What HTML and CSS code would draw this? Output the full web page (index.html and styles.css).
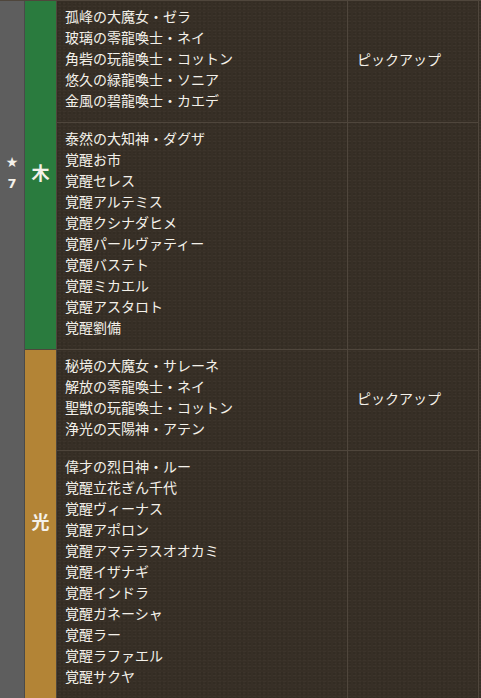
FILE: index.html
```html
<!DOCTYPE html>
<html lang="ja">
<head>
<meta charset="utf-8">
<link rel="stylesheet" href="styles.css">
</head>
<body>
<div class="table">
  <div class="rarity"><span class="star">★</span><span>7</span></div>
  <div class="attr wood">木</div>
  <div class="names">
    <div>孤峰の大魔女・ゼラ</div>
    <div>玻璃の零龍喚士・ネイ</div>
    <div>角砦の玩龍喚士・コットン</div>
    <div>悠久の緑龍喚士・ソニア</div>
    <div>金風の碧龍喚士・カエデ</div>
  </div>
  <div class="note">ピックアップ</div>
  <div class="names">
    <div>泰然の大知神・ダグザ</div>
    <div>覚醒お市</div>
    <div>覚醒セレス</div>
    <div>覚醒アルテミス</div>
    <div>覚醒クシナダヒメ</div>
    <div>覚醒パールヴァティー</div>
    <div>覚醒バステト</div>
    <div>覚醒ミカエル</div>
    <div>覚醒アスタロト</div>
    <div>覚醒劉備</div>
  </div>
  <div class="note"></div>
  <div class="attr light">光</div>
  <div class="names">
    <div>秘境の大魔女・サレーネ</div>
    <div>解放の零龍喚士・ネイ</div>
    <div>聖獣の玩龍喚士・コットン</div>
    <div>浄光の天陽神・アテン</div>
  </div>
  <div class="note">ピックアップ</div>
  <div class="names">
    <div>偉才の烈日神・ルー</div>
    <div>覚醒立花ぎん千代</div>
    <div>覚醒ヴィーナス</div>
    <div>覚醒アポロン</div>
    <div>覚醒アマテラスオオカミ</div>
    <div>覚醒イザナギ</div>
    <div>覚醒インドラ</div>
    <div>覚醒ガネーシャ</div>
    <div>覚醒ラー</div>
    <div>覚醒ラファエル</div>
    <div>覚醒サクヤ</div>
  </div>
  <div class="note"></div>
</div>
</body>
</html>
```

FILE: styles.css
```css
html, body {
  margin: 0;
  padding: 0;
  background: #372f26;
}
body {
  font-family: "Noto Sans CJK JP", "Noto Sans", sans-serif;
  color: #f4f1ea;
  font-size: 14px;
  line-height: 21px;
}
.table {
  display: grid;
  grid-template-columns: 25px 32px 291px 131px;
  width: 481px;
  border-top: 1px solid #4f463c;
  background-color: #372f26;
  background-image:
    radial-gradient(rgba(0,0,0,0.07) 1px, transparent 1.5px),
    radial-gradient(rgba(255,255,255,0.025) 1px, transparent 1.5px);
  background-size: 4px 5px, 5px 3px;
  background-position: 0 0, 2px 1px;
}
.rarity {
  grid-row: 1 / 5;
  grid-column: 1;
  background: #5e5e5e;
  border-right: 1px solid #4a4a4a;
  display: flex;
  flex-direction: column;
  align-items: center;
  justify-content: flex-start;
  padding-top: 150px;
  font-size: 13px;
  font-weight: bold;
  line-height: 22px;
  font-family: "DejaVu Sans", sans-serif;
}
.star {
  font-size: 14px;
}
.attr {
  display: flex;
  align-items: center;
  justify-content: center;
  font-size: 18px;
  font-weight: bold;
  padding-bottom: 5px;
  border-right: 1px solid #4f463c;
  border-bottom: 1px solid #4f463c;
}
.wood {
  grid-row: 1 / 3;
  background: #2a7b3e;
}
.light {
  grid-row: 3 / 5;
  background: #b38436;
}
.names {
  padding: 5px 8px 11px 8px;
  border-right: 1px solid #4f463c;
  border-bottom: 1px solid #4f463c;
  white-space: nowrap;
}
.note {
  display: flex;
  align-items: center;
  padding: 0 8px 4px 9px;
  border-right: 1px solid #4f463c;
  border-bottom: 1px solid #4f463c;
}
```
